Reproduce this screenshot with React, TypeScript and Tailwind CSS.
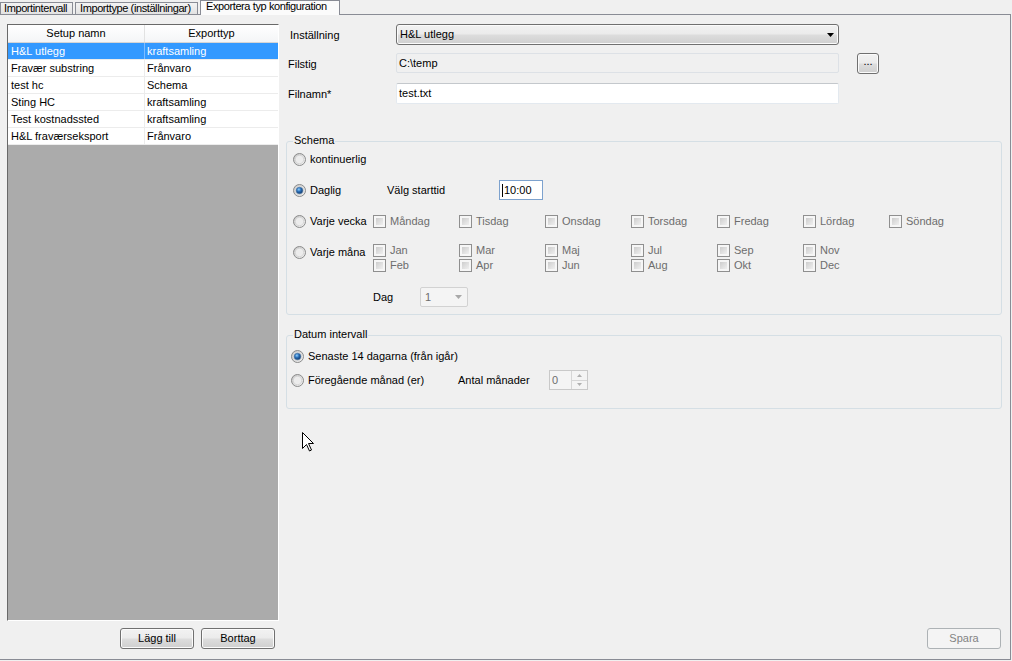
import React from "react";

const rows = [
  ["H&L utlegg", "kraftsamling"],
  ["Fravær substring", "Frånvaro"],
  ["test hc", "Schema"],
  ["Sting HC", "kraftsamling"],
  ["Test kostnadssted", "kraftsamling"],
  ["H&L fraværseksport", "Frånvaro"],
];

const days = ["Måndag", "Tisdag", "Onsdag", "Torsdag", "Fredag", "Lördag", "Söndag"];
const months = [
  ["Jan", "Feb"],
  ["Mar", "Apr"],
  ["Maj", "Jun"],
  ["Jul", "Aug"],
  ["Sep", "Okt"],
  ["Nov", "Dec"],
];

const btn =
  "flex items-center justify-center rounded-[3px] border border-[#707070] bg-[linear-gradient(#f2f2f2,#ebebeb_48%,#dddddd_52%,#cfcfcf)] shadow-[inset_0_0_0_1px_#fbfbfb]";

function Radio({ checked }: { checked?: boolean }) {
  return (
    <svg width="13" height="13" viewBox="0 0 13 13" className="shrink-0">
      <defs>
        <linearGradient id="rOuter" x1="0" y1="0" x2="1" y2="1">
          <stop offset="0" stopColor="#c4c4c4" />
          <stop offset="1" stopColor="#f6f6f6" />
        </linearGradient>
        <radialGradient id="rDot" cx="0.4" cy="0.35" r="0.7">
          <stop offset="0" stopColor="#8fd0ff" />
          <stop offset="0.45" stopColor="#2a6fb8" />
          <stop offset="1" stopColor="#0d2f5e" />
        </radialGradient>
      </defs>
      <circle cx="6.5" cy="6.5" r="6" fill="url(#rOuter)" stroke="#8a8b8b" />
      <circle cx="6.5" cy="6.5" r="4.2" fill="#ececec" stroke="#d2d2d2" strokeWidth="0.8" />
      {checked && <circle cx="6.5" cy="6.5" r="3.3" fill="url(#rDot)" stroke="#3f6f9f" strokeWidth="0.6" />}
    </svg>
  );
}

function Check() {
  return (
    <div className="h-[13px] w-[13px] shrink-0 border border-[#8f8f8f] bg-[#f6f6f6] p-[2px]">
      <div className="h-full w-full bg-[linear-gradient(135deg,#cdcdcd,#efefef)]" />
    </div>
  );
}

function Arrow({ color }: { color: string }) {
  return (
    <svg width="7" height="4" viewBox="0 0 7 4">
      <path d="M0 0h7L3.5 4z" fill={color} />
    </svg>
  );
}

function Group({ title, className, children }: { title: string; className: string; children: React.ReactNode }) {
  return (
    <div className={"relative ml-[7px] w-[716px] rounded-[3px] border border-[#d5dfe5] " + className}>
      <span className="absolute -top-[8px] left-[6px] bg-[#f0f0f0] px-[1px] leading-[13px]">{title}</span>
      {children}
    </div>
  );
}

export default function App() {
  return (
    <div className="relative h-[661px] w-[1012px] overflow-hidden bg-[#f0f0f0] font-[family-name:'Liberation_Sans',Arial,sans-serif] text-[11px] text-black">
      {/* tabs */}
      <div className="flex h-[14px] items-end whitespace-nowrap tracking-[-0.4px]">
        <div className="h-[12px] w-[73px] overflow-hidden border border-b-0 border-[#898c95] bg-[linear-gradient(#f3f3f3,#e2e2e2)] pl-[3px] leading-[11px]">
          Importintervall
        </div>
        <div className="ml-[2px] h-[12px] w-[123px] overflow-hidden border border-b-0 border-[#898c95] bg-[linear-gradient(#f3f3f3,#e2e2e2)] pl-[4px] leading-[11px]">
          Importtype (inställningar)
        </div>
        <div className="relative z-10 -mb-px ml-[2px] h-[15px] w-[140px] border border-b-0 border-[#898c95] bg-[#fbfbfb] pl-[5px] leading-[11px]">
          Exportera typ konfiguration
        </div>
      </div>

      <div className="flex h-[646px] w-[1011px] border-t border-r border-b border-[#898c95]">
        {/* left list */}
        <div className="flex w-[279px] flex-col pt-[9px] pb-[10px] pl-[7px]">
          <div className="flex flex-1 flex-col border-t border-l border-r border-b border-t-[#696969] border-l-[#696969] border-r-white border-b-white bg-[#ababab]">
            <div className="flex h-[18px] border-b border-[#d5d5d5] bg-[linear-gradient(#ffffff,#f4f5f7)] leading-[17px]">
              <div className="w-[137px] border-r border-[#e2e2e2] text-center">Setup namn</div>
              <div className="flex-1 text-center">Exporttyp</div>
            </div>
            {rows.map(([name, type], i) => (
              <div
                key={name}
                className={
                  "flex h-[17px] border-b border-[#ececec] leading-[16px] " +
                  (i === 0 ? "bg-[#3399ff] text-white" : "bg-white")
                }
              >
                <div className={"w-[137px] border-r pl-[3px] " + (i === 0 ? "border-[#7dbcff]" : "border-[#ececec]")}>{name}</div>
                <div className="flex-1 pl-[2px]">{type}</div>
              </div>
            ))}
          </div>
          <div className="mt-[7px] flex justify-end gap-[7px] pr-[4px]">
            <button className={btn + " h-[21px] w-[74px]"}>Lägg till</button>
            <button className={btn + " h-[21px] w-[74px]"}>Borttag</button>
          </div>
        </div>

        {/* right form */}
        <div className="flex flex-1 flex-col pt-[9px] pb-[10px]">
          <div className="pl-[9px]">
            <div className="flex h-[21px] items-center">
              <span className="w-[108px] pt-[2px] pl-[2px]">Inställning</span>
              <div className={"h-[21px] w-[443px] justify-between pr-[4px] pl-[3px] " + btn.replace("justify-center", "")}>
                <span>H&amp;L utlegg</span>
                <Arrow color="#000" />
              </div>
            </div>
            <div className="mt-[8px] flex h-[20px] items-center">
              <span className="w-[108px] pt-[2px]">Filstig</span>
              <div className="flex h-[20px] w-[443px] items-center rounded-[2px] border border-[#dde1e6] bg-[#f0f0f0] pl-[2px]">
                C:\temp
              </div>
              <button className={btn + " ml-[18px] h-[21px] w-[22px] pb-[3px] leading-none"}>...</button>
            </div>
            <div className="mt-[10px] flex h-[21px] items-center">
              <span className="w-[108px] pt-[2px]">Filnamn*</span>
              <div className="flex h-[21px] w-[443px] items-center rounded-[2px] border border-[#e3e9ef] border-t-[#c4c8cc] bg-white pl-[2px]">
                test.txt
              </div>
            </div>
          </div>

          <Group title="Schema" className="mt-[37px] h-[174px] pl-[6px]">
            <div className="mt-[9px] flex h-[16px] items-center">
              <Radio />
              <span className="ml-[4px]">kontinuerlig</span>
            </div>
            <div className="mt-[13px] flex h-[20px] items-center">
              <div className="flex w-[94px] items-center">
                <Radio checked />
                <span className="ml-[4px]">Daglig</span>
              </div>
              <span className="w-[112px]">Välg starttid</span>
              <div className="flex h-[20px] w-[44px] items-center border border-[#7da2ce] bg-white pl-[2px]">
                <span className="mr-px h-[13px] w-px bg-black" />
                10:00
              </div>
            </div>
            <div className="mt-[13px] flex h-[16px] items-center">
              <div className="flex w-[80px] items-center">
                <Radio />
                <span className="ml-[4px] whitespace-nowrap">Varje vecka</span>
              </div>
              {days.map((d) => (
                <div key={d} className="flex w-[86px] items-center">
                  <Check />
                  <span className="ml-[4px] text-[#6d6d6d]">{d}</span>
                </div>
              ))}
            </div>
            <div className="mt-[14px] flex items-start">
              <div className="mt-[2px] flex h-[15px] w-[80px] items-center">
                <Radio />
                <span className="ml-[4px] whitespace-nowrap">Varje måna</span>
              </div>
              {months.map((pair) => (
                <div key={pair[0]} className="flex w-[86px] flex-col">
                  {pair.map((m) => (
                    <div key={m} className="flex h-[15px] items-center">
                      <Check />
                      <span className="ml-[4px] text-[#6d6d6d]">{m}</span>
                    </div>
                  ))}
                </div>
              ))}
            </div>
            <div className="mt-[14px] flex h-[20px] items-center">
              <div className="w-[80px]" />
              <span className="w-[47px]">Dag</span>
              <div className="flex h-[20px] w-[48px] items-center justify-between rounded-[2px] border border-[#d2d2d2] bg-[#f4f4f4] pr-[5px] pl-[4px] text-[#6d6d6d]">
                <span>1</span>
                <Arrow color="#a8a8a8" />
              </div>
            </div>
          </Group>

          <Group title="Datum intervall" className="mt-[20px] h-[74px] pl-[4px]">
            <div className="mt-[12px] flex h-[16px] items-center">
              <Radio checked />
              <span className="ml-[4px]">Senaste 14 dagarna (från igår)</span>
            </div>
            <div className="mt-[6px] flex h-[20px] items-center">
              <div className="flex w-[167px] items-center">
                <Radio />
                <span className="ml-[4px]">Föregående månad (er)</span>
              </div>
              <span className="w-[91px]">Antal månader</span>
              <div className="flex h-[20px] w-[39px] items-stretch border border-[#c9c9c9] bg-[#f4f4f4] text-[#6d6d6d]">
                <span className="flex flex-1 items-center pl-[2px]">0</span>
                <div className="flex w-[16px] flex-col border-l border-[#d6d6d6]">
                  <div className="flex flex-1 items-center justify-center border-b border-[#d6d6d6]">
                    <svg width="5" height="3" viewBox="0 0 5 3">
                      <path d="M0 3h5L2.5 0z" fill="#b0b0b0" />
                    </svg>
                  </div>
                  <div className="flex flex-1 items-center justify-center">
                    <svg width="5" height="3" viewBox="0 0 5 3">
                      <path d="M0 0h5L2.5 3z" fill="#b0b0b0" />
                    </svg>
                  </div>
                </div>
              </div>
            </div>
          </Group>

          <div className="flex-1" />
          <div className="flex justify-end pr-[9px]">
            <button className="h-[21px] w-[74px] rounded-[3px] border border-[#adb2b5] bg-[#f4f4f4] text-[#838383]">
              Spara
            </button>
          </div>
        </div>
      </div>

      {/* mouse cursor */}
      <svg className="absolute top-[432px] left-[302px]" width="13" height="20" viewBox="0 0 13 20">
        <path d="M0.5 0.5V16.5L4.5 12.5L7.5 19L9.5 18L6.5 11.5H11.5Z" fill="#fff" stroke="#000" strokeWidth="1" />
      </svg>
    </div>
  );
}
